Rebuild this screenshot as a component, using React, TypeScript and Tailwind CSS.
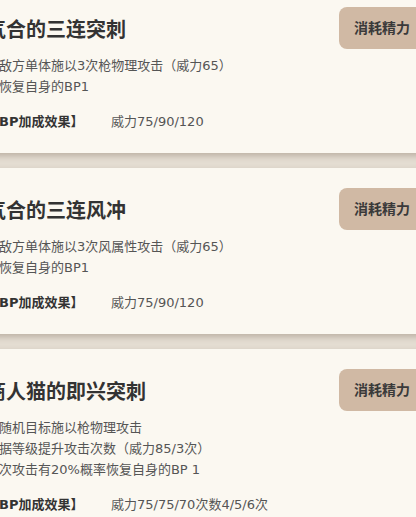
import React from 'react';

type Skill = {
  name: string;
  lines: string[];
  bonus: string;
};

const skills: Skill[] = [
  {
    name: '气合的三连突刺',
    lines: ['对敌方单体施以3次枪物理攻击（威力65）', '并恢复自身的BP1'],
    bonus: '威力75/90/120',
  },
  {
    name: '气合的三连风冲',
    lines: ['对敌方单体施以3次风属性攻击（威力65）', '并恢复自身的BP1'],
    bonus: '威力75/90/120',
  },
  {
    name: '商人猫的即兴突刺',
    lines: ['对随机目标施以枪物理攻击', '根据等级提升攻击次数（威力85/3次）', '每次攻击有20%概率恢复自身的BP 1'],
    bonus: '威力75/75/70次数4/5/6次',
  },
];

const SkillCard = ({ skill }: { skill: Skill }) => (
  <div className="w-[460px] bg-[#fbf8f1] shadow-[0_3px_6px_rgba(70,50,30,0.25)] flex justify-between pt-[20px] pb-[21px]">
    <div className="flex flex-col">
      <div className="h-[46px] flex items-center text-[20px] font-bold text-[#333]">{skill.name}</div>
      <div className="mt-[2px] text-[13px] leading-[21px] text-[#555]">
        {skill.lines.map((line) => (
          <div key={line}>{line}</div>
        ))}
      </div>
      <div className="mt-[14px] flex text-[13px] leading-[21px]">
        <span className="w-[125px] font-bold text-[#333]">【BP加成效果】</span>
        <span className="text-[#555]">{skill.bonus}</span>
      </div>
    </div>
    <div className="shrink-0 w-[96px] h-[42px] mr-[11px] rounded-[8px] bg-[#d0b9a4] flex items-center pl-[15px] text-[14px] font-semibold text-[#3a3a3a]">
      消耗精力
    </div>
  </div>
);

export default function App() {
  return (
    <div
      className="w-[416px] h-[517px] overflow-hidden bg-[#e4ddd2]"
      style={{ fontFamily: '"DejaVu Sans", "Noto Sans CJK SC", sans-serif' }}
    >
      <div className="-mt-[13px] -ml-[14px] flex flex-col gap-[15px]">
        {skills.map((s) => (
          <SkillCard key={s.name} skill={s} />
        ))}
      </div>
    </div>
  );
}
